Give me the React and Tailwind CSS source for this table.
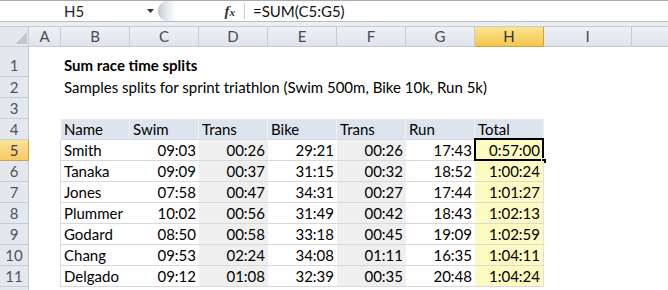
import React from "react";

const cols = [
  { k: "A", w: "w-[32px]" },
  { k: "B", w: "w-[69px]" },
  { k: "C", w: "w-[69px]" },
  { k: "D", w: "w-[69px]" },
  { k: "E", w: "w-[69px]" },
  { k: "F", w: "w-[69px]" },
  { k: "G", w: "w-[69px]" },
  { k: "H", w: "w-[69px]" },
  { k: "I", w: "w-[88px]" },
];

const data = [
  ["Smith", "09:03", "00:26", "29:21", "00:26", "17:43", "0:57:00"],
  ["Tanaka", "09:09", "00:37", "31:15", "00:32", "18:52", "1:00:24"],
  ["Jones", "07:58", "00:47", "34:31", "00:27", "17:44", "1:01:27"],
  ["Plummer", "10:02", "00:56", "31:49", "00:42", "18:43", "1:02:13"],
  ["Godard", "08:50", "00:58", "33:18", "00:45", "19:09", "1:02:59"],
  ["Chang", "09:53", "02:24", "34:08", "01:11", "16:35", "1:04:11"],
  ["Delgado", "09:12", "01:08", "32:39", "00:35", "20:48", "1:04:24"],
];

const headers = ["Name", "Swim", "Trans", "Bike", "Trans", "Run", "Total"];

function RowHead({ n, active, tall }) {
  return (
    <div
      className={
        "w-[29px] shrink-0 flex justify-center border-r border-b " +
        (tall ? "items-end pb-[3px] " : "items-center ") +
        (active
          ? "bg-gradient-to-b from-[#fbe39a] to-[#f6c965] border-[#c9a44b] text-[#3b3b3b]"
          : "bg-[#e4e8ee] border-[#c6ccd5] text-[#4a5460]")
      }
    >
      {n}
    </div>
  );
}

export default function App() {
  return (
    <div
      className="w-[668px] h-[290px] overflow-hidden bg-white text-[15px] leading-none text-black"
      style={{ fontFamily: "'Lato', 'Open Sans', sans-serif" }}
    >
      {/* formula bar */}
      <div className="h-[22px] flex border-t border-t-[#a5abb3] border-b border-b-[#b9bec6] bg-white">
        <div className="w-[158px] shrink-0 flex items-center relative">
          <span className="absolute left-[64px] top-[3px] text-[#222]">H5</span>
          <svg className="absolute left-[147px] top-[8px]" width="7" height="4" viewBox="0 0 7 4">
            <polygon points="0,0 7,0 3.5,4" fill="#333" />
          </svg>
        </div>
        <div className="w-[18px] shrink-0 rounded-l-full bg-gradient-to-r from-[#c9ced6] via-[#e8ebef] to-white border-l border-[#b5bbc4]" />
        <div className="w-[68px] shrink-0 flex items-center justify-end pr-[9px]">
          <span className="italic font-bold text-[15px] text-[#333]" style={{ fontFamily: "'Liberation Serif', serif" }}>
            f<span className="text-[11px]">x</span>
          </span>
        </div>
        <div className="w-px bg-[#c9ced6] my-[2px]" />
        <div className="flex-1 flex items-center pl-[8px] text-[#111]">=SUM(C5:G5)</div>
      </div>
      <div className="h-[4px] bg-[#eceef1]" />

      {/* column header row */}
      <div className="h-[21px] flex border-t border-[#c6ccd5]">
        <div className="w-[29px] shrink-0 bg-[#e4e8ee] border-r border-b border-[#c6ccd5] relative">
          <svg className="absolute left-[15px] top-[5px]" width="12" height="12" viewBox="0 0 12 12">
            <polygon points="12,0 12,12 0,12" fill="#c3c8cf" />
          </svg>
        </div>
        {cols.map((c) => (
          <div
            key={c.k}
            className={
              c.w +
              " shrink-0 flex items-center justify-center border-r border-b " +
              (c.k === "H"
                ? "bg-gradient-to-b from-[#fde48c] to-[#f5c54a] border-[#c9a44b] text-[#333]"
                : "bg-gradient-to-b from-[#eef1f5] to-[#e0e4ea] border-[#c6ccd5] text-[#444c56]")
            }
          >
            {c.k}
          </div>
        ))}
        <div className="flex-1 bg-gradient-to-b from-[#eef1f5] to-[#e0e4ea] border-b border-[#c6ccd5]" />
      </div>

      {/* row 1 */}
      <div className="h-[30px] flex">
        <RowHead n={1} tall />
        <div className="w-[32px] shrink-0" />
        <div className="flex-1 flex items-end pb-[4px] pl-[3px] font-bold">Sum race time splits</div>
      </div>
      {/* row 2 */}
      <div className="h-[21px] flex">
        <RowHead n={2} />
        <div className="w-[32px] shrink-0" />
        <div className="flex-1 flex items-center pl-[3px]">
          Samples splits for sprint triathlon (Swim 500m, Bike 10k, Run 5k)
        </div>
      </div>
      {/* row 3 */}
      <div className="h-[21px] flex">
        <RowHead n={3} />
      </div>
      {/* row 4 table header */}
      <div className="h-[21px] flex">
        <RowHead n={4} />
        <div className="w-[32px] shrink-0" />
        {headers.map((h, i) => (
          <div
            key={i}
            className="w-[69px] shrink-0 flex items-center pl-[3px] bg-[#dde4ee] border-r border-r-[#eef1f5] border-t border-t-[#e6e9ee] border-b border-b-[#d3d9e2]"
          >
            {h}
          </div>
        ))}
      </div>
      {/* data rows */}
      {data.map((r, ri) => (
        <div key={ri} className="h-[21px] flex">
          <RowHead n={ri + 5} active={ri === 0} />
          <div className="w-[32px] shrink-0 border-r border-[#dadada]" />
          {r.map((v, ci) => {
            const bg =
              ci === 2 || ci === 4
                ? "bg-[#efefef]"
                : ci === 6
                ? "bg-[#fdfac2]"
                : "bg-white";
            const active = ri === 0 && ci === 6;
            return (
              <div
                key={ci}
                className={
                  "w-[69px] shrink-0 flex items-center border-b border-b-[#d9d9d9] relative " +
                  bg +
                  (ci === 0 ? " pl-[3px]" : " justify-end pr-[3px]") +
                  (ci === 6 ? " border-r border-r-[#e2e2e2]" : "")
                }
              >
                {v}
                {active && (
                  <>
                    <div className="absolute left-[-1px] top-[-2px] right-[-1px] bottom-[-1px] border-[2px] border-black pointer-events-none" />
                    <div className="absolute right-[-4px] bottom-[-4px] w-[6px] h-[6px] bg-black border border-white" />
                  </>
                )}
              </div>
            );
          })}
        </div>
      ))}
      <div className="h-[21px] flex">
        <div className="w-[29px] shrink-0 bg-[#e4e8ee] border-r border-[#c6ccd5]" />
      </div>
    </div>
  );
}
